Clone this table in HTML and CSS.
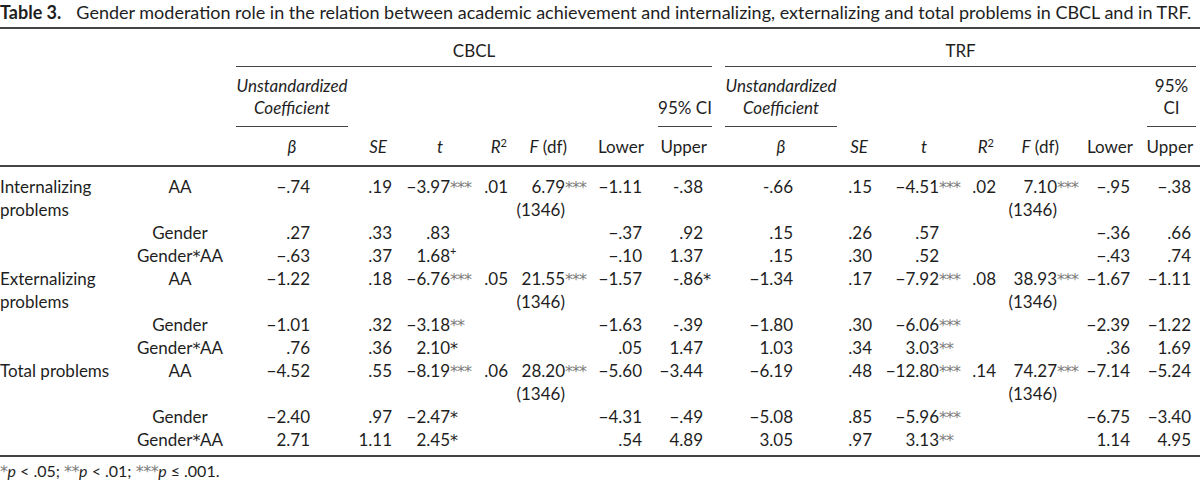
FILE: index.html
```html
<!DOCTYPE html>
<html lang="en">
<head>
<meta charset="utf-8">
<title>Table 3</title>
<link rel="stylesheet" href="styles.css">
</head>
<body>
<p class="caption"><b>Table 3.</b><span class="cap-text">Gender moderation role in the relation between academic achievement and internalizing, externalizing and total problems in CBCL and in TRF.</span></p>
<table class="data">
<colgroup>
<col class="w-label"><col class="w-pred"><col class="w-beta"><col class="w-se"><col class="w-t"><col class="w-r"><col class="w-f"><col class="w-lo"><col class="w-up"><col class="w-gap"><col class="w-beta2"><col class="w-se2"><col class="w-t2"><col class="w-r2"><col class="w-f2"><col class="w-lo2"><col class="w-up2">
</colgroup>
<thead>
<tr class="groups">
<th colspan="2"></th>
<th colspan="7"><div class="uline">CBCL</div></th>
<th></th>
<th colspan="7"><div class="uline trf">TRF</div></th>
</tr>
<tr class="sub">
<th colspan="2"></th>
<th><div class="uline2 it">Unstandardized Coefficient</div></th>
<th colspan="5"></th>
<th><div class="uline2 ci">95% CI</div></th>
<th></th>
<th><div class="uline2 it">Unstandardized Coefficient</div></th>
<th colspan="5"></th>
<th><div class="uline2 ci2">95%<br>CI</div></th>
</tr>
<tr class="cols">
<th></th><th></th>
<th><i>β</i></th><th><i>SE</i></th><th><i>t</i></th><th><i>R</i><sup>2</sup></th><th><i>F</i> (df)</th><th>Lower</th><th>Upper</th>
<th></th>
<th><i>β</i></th><th><i>SE</i></th><th><i>t</i></th><th><i>R</i><sup>2</sup></th><th><i>F</i> (df)</th><th>Lower</th><th>Upper</th>
</tr>
</thead>
<tbody>
<tr>
<td>Internalizing problems</td><td>AA</td>
<td>−.74</td><td>.19</td><td>−3.97<span class="s g">***</span></td><td>.01</td><td><span class="n">6.79</span><span class="s g">***</span><br>(1346)</td><td>−1.11</td><td>-.38</td>
<td></td>
<td>-.66</td><td>.15</td><td>−4.51<span class="s g">***</span></td><td>.02</td><td><span class="n">7.10</span><span class="s g">***</span><br>(1346)</td><td>−.95</td><td>−.38</td>
</tr>
<tr>
<td></td><td>Gender</td>
<td>.27</td><td>.33</td><td>.83</td><td></td><td></td><td>−.37</td><td>.92</td>
<td></td>
<td>.15</td><td>.26</td><td>.57</td><td></td><td></td><td>−.36</td><td>.66</td>
</tr>
<tr>
<td></td><td>Gender<span class="ast">*</span>AA</td>
<td>−.63</td><td>.37</td><td>1.68<span class="s"><sup>+</sup></span></td><td></td><td></td><td>−.10</td><td>1.37</td>
<td></td>
<td>.15</td><td>.30</td><td>.52</td><td></td><td></td><td>−.43</td><td>.74</td>
</tr>
<tr>
<td>Externalizing problems</td><td>AA</td>
<td>−1.22</td><td>.18</td><td>−6.76<span class="s g">***</span></td><td>.05</td><td><span class="n">21.55</span><span class="s g">***</span><br>(1346)</td><td>−1.57</td><td>-.86<span class="s">*</span></td>
<td></td>
<td>−1.34</td><td>.17</td><td>−7.92<span class="s g">***</span></td><td>.08</td><td><span class="n">38.93</span><span class="s g">***</span><br>(1346)</td><td>−1.67</td><td>−1.11</td>
</tr>
<tr>
<td></td><td>Gender</td>
<td>−1.01</td><td>.32</td><td>−3.18<span class="s g">**</span></td><td></td><td></td><td>−1.63</td><td>-.39</td>
<td></td>
<td>−1.80</td><td>.30</td><td>−6.06<span class="s g">***</span></td><td></td><td></td><td>−2.39</td><td>−1.22</td>
</tr>
<tr>
<td></td><td>Gender<span class="ast">*</span>AA</td>
<td>.76</td><td>.36</td><td>2.10<span class="s">*</span></td><td></td><td></td><td>.05</td><td>1.47</td>
<td></td>
<td>1.03</td><td>.34</td><td>3.03<span class="s g">**</span></td><td></td><td></td><td>.36</td><td>1.69</td>
</tr>
<tr>
<td>Total problems</td><td>AA</td>
<td>−4.52</td><td>.55</td><td>−8.19<span class="s g">***</span></td><td>.06</td><td><span class="n">28.20</span><span class="s g">***</span><br>(1346)</td><td>−5.60</td><td>−3.44</td>
<td></td>
<td>−6.19</td><td>.48</td><td>−12.80<span class="s g">***</span></td><td>.14</td><td><span class="n">74.27</span><span class="s g">***</span><br>(1346)</td><td>−7.14</td><td>−5.24</td>
</tr>
<tr>
<td></td><td>Gender</td>
<td>−2.40</td><td>.97</td><td>−2.47<span class="s">*</span></td><td></td><td></td><td>−4.31</td><td>−.49</td>
<td></td>
<td>−5.08</td><td>.85</td><td>−5.96<span class="s g">***</span></td><td></td><td></td><td>−6.75</td><td>−3.40</td>
</tr>
<tr>
<td></td><td>Gender<span class="ast">*</span>AA</td>
<td>2.71</td><td>1.11</td><td>2.45<span class="s">*</span></td><td></td><td></td><td>.54</td><td>4.89</td>
<td></td>
<td>3.05</td><td>.97</td><td>3.13<span class="s g">**</span></td><td></td><td></td><td>1.14</td><td>4.95</td>
</tr>
</tbody>
</table>
<p class="note"><span class="ast g">*</span><i>p</i> &lt; .05; <span class="ast g">**</span><i>p</i> &lt; .01; <span class="ast g">***</span><i>p</i> ≤ .001.</p>
</body>
</html>
```
FILE: styles.css
```css
body {
  margin: 0;
  font-family: Lato, "Noto Sans", sans-serif;
  color: #1e1e1e;
  background: #fff;
}

.caption {
  margin: 0;
  font-size: 18px;
  line-height: 22px;
  padding-top: 1px;
  height: 26px;
  white-space: nowrap;
}
.caption b { font-weight: 700; }
.cap-text { margin-left: 15px; }

.data {
  width: 1200px;
  table-layout: fixed;
  border-collapse: collapse;
  border-top: 2px solid #444;
  border-bottom: 2px solid #444;
  font-size: 17px;
}

.w-label { width: 124px; }
.w-pred { width: 112px; }
.w-beta { width: 112px; }
.w-se { width: 52px; }
.w-t { width: 78px; }
.w-r { width: 34px; }
.w-f { width: 78px; }
.w-lo { width: 58px; }
.w-up { width: 64px; }
.w-gap { width: 13px; }
.w-beta2 { width: 112px; }
.w-se2 { width: 41px; }
.w-t2 { width: 90px; }
.w-r2 { width: 32px; }
.w-f2 { width: 80px; }
.w-lo2 { width: 58px; }
.w-up2 { width: 62px; }

th, td {
  padding: 0;
  font-weight: 400;
  line-height: 23px;
  white-space: nowrap;
}

/* group row */
.groups th { padding-top: 10px; }
.uline {
  border-bottom: 1px solid #444;
  text-align: center;
  padding-bottom: 4px;
}
.uline.trf { margin-right: 4px; }

/* sub header row */
.sub th { padding-top: 8px; vertical-align: bottom; }
.uline2 {
  border-bottom: 1px solid #444;
  text-align: center;
  line-height: 22px;
  padding-bottom: 7px;
  white-space: normal;
}
.uline2.it { font-style: italic; }
.uline2.ci { margin-left: 10px; }
.uline2.ci2 { margin-left: 9px; margin-right: 4px; }

/* column header row */
.cols th {
  padding-top: 8px;
  padding-bottom: 7px;
  border-bottom: 2px solid #444;
  text-align: right;
}
.cols sup { font-size: 11px; vertical-align: 6px; line-height: 0; }
.cols th:nth-child(3), .cols th:nth-child(11) { text-align: center; }
.cols th:nth-child(4) { padding-right: 13px; }
.cols th:nth-child(5) { padding-right: 35px; }
.cols th:nth-child(6) { padding-right: 5px; }
.cols th:nth-child(7) { padding-right: 23px; }
.cols th:nth-child(8) { padding-right: 4px; }
.cols th:nth-child(9) { padding-right: 5px; }
.cols th:nth-child(12) { padding-right: 10px; }
.cols th:nth-child(13) { padding-right: 41px; }
.cols th:nth-child(14) { padding-right: 6px; }
.cols th:nth-child(15) { padding-right: 21px; }
.cols th:nth-child(16) { padding-right: 5px; }
.cols th:nth-child(17) { padding-right: 7px; }

/* body */
tbody td { vertical-align: top; text-align: right; }
tbody tr:first-child td { padding-top: 8px; }
tbody tr:last-child td { padding-bottom: 4px; }
tbody td:nth-child(1) { text-align: left; white-space: normal; }
tbody td:nth-child(2) { text-align: center; }
tbody td:nth-child(3) { padding-right: 38px; }
tbody td:nth-child(4) { padding-right: 8px; }
tbody td:nth-child(5) { padding-right: 28px; }
tbody td:nth-child(6) { padding-right: 4px; }
tbody td:nth-child(7) { padding-right: 25px; }
tbody td:nth-child(8) { padding-right: 6px; }
tbody td:nth-child(9) { padding-right: 9px; }
tbody td:nth-child(11) { padding-right: 44px; }
tbody td:nth-child(12) { padding-right: 6px; }
tbody td:nth-child(13) { padding-right: 29px; }
tbody td:nth-child(14) { padding-right: 4px; }
tbody td:nth-child(15) { padding-right: 23px; }
tbody td:nth-child(16) { padding-right: 8px; }
tbody td:nth-child(17) { padding-right: 9px; }

.n { margin-right: 4px; }
.s {
  display: inline-block;
  width: 0;
  text-align: left;
  white-space: nowrap;
  font-family: "DejaVu Sans", sans-serif;
  font-size: 16px;
  letter-spacing: -1px;
  line-height: 0;
}
.n + .s { margin-left: -4px; }
.ast {
  font-family: "DejaVu Sans", sans-serif;
  font-size: 16px;
  letter-spacing: -0.5px;
  line-height: 0;
}
.s sup { font-family: Lato, sans-serif; font-size: 11px; vertical-align: 7px; line-height: 0; letter-spacing: 0; }
.g { color: #7d7d7d; }

.note {
  margin: 2px 0 0;
  font-size: 16px;
  line-height: 23px;
}
```
